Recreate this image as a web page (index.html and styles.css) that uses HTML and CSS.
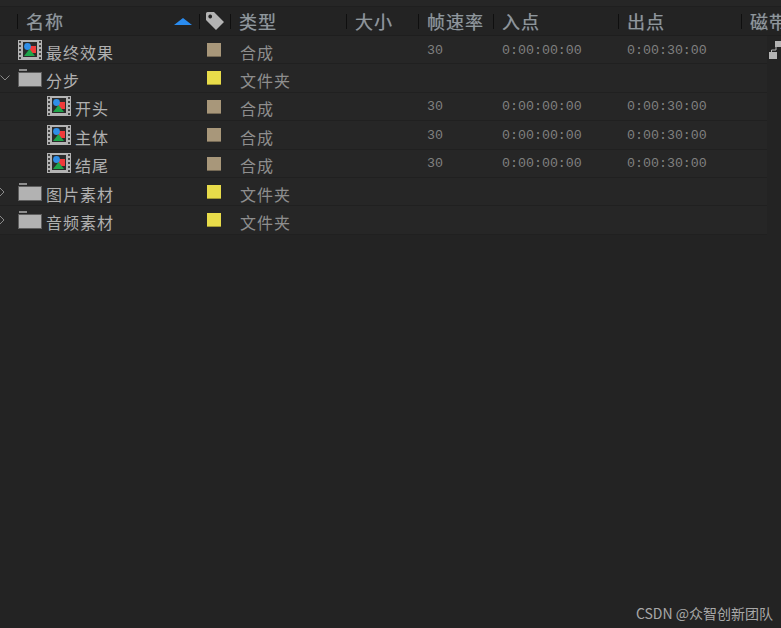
FILE: index.html
```html
<!DOCTYPE html>
<html lang="zh">
<head>
<meta charset="utf-8">
<title>项目面板</title>
<link rel="stylesheet" href="styles.css">
</head>
<body>
<svg class="defs" width="0" height="0" aria-hidden="true">
  <symbol id="comp" viewBox="0 0 24 20">
    <rect x="0" y="0" width="24" height="20" fill="#b4b4b4"/>
    <rect x="1" y="1" width="2" height="2" fill="#444"/><rect x="1" y="5" width="2" height="2" fill="#444"/><rect x="1" y="9" width="2" height="2" fill="#444"/><rect x="1" y="13" width="2" height="2" fill="#444"/><rect x="1" y="17" width="2" height="2" fill="#444"/>
    <rect x="21" y="1" width="2" height="2" fill="#444"/><rect x="21" y="5" width="2" height="2" fill="#444"/><rect x="21" y="9" width="2" height="2" fill="#444"/><rect x="21" y="13" width="2" height="2" fill="#444"/><rect x="21" y="17" width="2" height="2" fill="#444"/>
    <rect x="5" y="2" width="14" height="15" fill="#2b2b2b"/>
    <rect x="11" y="6" width="7" height="7" fill="#f03a3a"/>
    <circle cx="9.5" cy="6.5" r="3.4" fill="#2f8fe8"/>
    <polygon points="11.5,9 17,16 6,16" fill="#1fa64a"/>
  </symbol>
  <symbol id="folder" viewBox="0 0 24 18">
    <rect x="1" y="0" width="8" height="2" fill="#8d8d8d"/>
    <rect x="0.5" y="3.5" width="23" height="14" fill="#b2b2b2" stroke="#5e5e5e"/>
  </symbol>
</svg>
<main class="panel">
  <div class="strip"></div>
  <header class="cols head">
    <div class="hc first"><span class="hname">名称</span><svg class="sort" width="18" height="7" viewBox="0 0 18 7"><polygon points="9,0 18,7 0,7" fill="#2a8cf0"/></svg></div>
    <div class="hc tagc"><svg width="20" height="20" viewBox="0 0 20 20"><path d="M1 2.5 Q1 1 2.5 1 L9 1 L19 11 L11 19 L1 9 Z M5.2 3.6 a1.9 1.9 0 1 0 .01 0 Z" fill="#b4b4b4" fill-rule="evenodd"/></svg></div>
    <div class="hc">类型</div>
    <div class="hc">大小</div>
    <div class="hc">帧速率</div>
    <div class="hc">入点</div>
    <div class="hc">出点</div>
    <div class="hc clip">磁带名称</div>
  </header>
  <div class="body">
    <div class="rows">
      <div class="cols row">
        <div class="name"><span class="tw"></span><svg class="ic"><use href="#comp"/></svg><span>最终效果</span></div>
        <div class="swc"><i class="sw tan"></i></div><div class="type">合成</div><div></div><div class="num">30</div><div class="num">0:00:00:00</div><div class="num">0:00:30:00</div><div></div>
      </div>
      <div class="cols row">
        <div class="name"><span class="tw"><svg width="10" height="6" viewBox="0 0 10 6"><path d="M0.5 .5 L5 5 L9.5 .5" fill="none" stroke="#8a8a8a"/></svg></span><svg class="ic fo"><use href="#folder"/></svg><span>分步</span></div>
        <div class="swc"><i class="sw yel"></i></div><div class="type">文件夹</div><div></div><div></div><div></div><div></div><div></div>
      </div>
      <div class="cols row">
        <div class="name sub"><span class="tw"></span><svg class="ic"><use href="#comp"/></svg><span>开头</span></div>
        <div class="swc"><i class="sw tan"></i></div><div class="type">合成</div><div></div><div class="num">30</div><div class="num">0:00:00:00</div><div class="num">0:00:30:00</div><div></div>
      </div>
      <div class="cols row">
        <div class="name sub"><span class="tw"></span><svg class="ic"><use href="#comp"/></svg><span>主体</span></div>
        <div class="swc"><i class="sw tan"></i></div><div class="type">合成</div><div></div><div class="num">30</div><div class="num">0:00:00:00</div><div class="num">0:00:30:00</div><div></div>
      </div>
      <div class="cols row">
        <div class="name sub"><span class="tw"></span><svg class="ic"><use href="#comp"/></svg><span>结尾</span></div>
        <div class="swc"><i class="sw tan"></i></div><div class="type">合成</div><div></div><div class="num">30</div><div class="num">0:00:00:00</div><div class="num">0:00:30:00</div><div></div>
      </div>
      <div class="cols row">
        <div class="name"><span class="tw"><svg class="cr" width="6" height="10" viewBox="0 0 6 10"><path d="M.5 .5 L5 5 L.5 9.5" fill="none" stroke="#8a8a8a"/></svg></span><svg class="ic fo"><use href="#folder"/></svg><span>图片素材</span></div>
        <div class="swc"><i class="sw yel"></i></div><div class="type">文件夹</div><div></div><div></div><div></div><div></div><div></div>
      </div>
      <div class="cols row">
        <div class="name"><span class="tw"><svg class="cr" width="6" height="10" viewBox="0 0 6 10"><path d="M.5 .5 L5 5 L.5 9.5" fill="none" stroke="#8a8a8a"/></svg></span><svg class="ic fo"><use href="#folder"/></svg><span>音频素材</span></div>
        <div class="swc"><i class="sw yel"></i></div><div class="type">文件夹</div><div></div><div></div><div></div><div></div><div></div>
      </div>
    </div>
    <aside class="side">
      <svg width="12" height="19" viewBox="0 0 12 19"><rect x="6" y="0" width="6" height="6" fill="#b4b4b4"/><path d="M7 6 V9 H2.5 V12" fill="none" stroke="#b4b4b4"/><rect x="0" y="11" width="8" height="7" fill="#b4b4b4"/></svg>
    </aside>
  </div>
  <div class="mark">CSDN @众智创新团队</div>
</main>
</body>
</html>
```
FILE: styles.css
```css
* { box-sizing: border-box; }
html, body { margin: 0; height: 100%; overflow: hidden; background: #232323; }
body { font-family: "Noto Sans CJK SC", "Liberation Sans", sans-serif; }
.defs { position: absolute; }
.panel { position: relative; height: 628px; width: 781px; overflow: hidden; }
.strip { height: 7px; background: #262626; border-bottom: 1px solid #1f1f1f; }
.cols { display: grid; grid-template-columns: 199px 31px 116px 72px 75px 125px 123px 1fr; align-items: center; }
.head { height: 29px; border-bottom: 1px solid #1e1e1e; color: #8f979c; font-size: 18px; line-height: 29px; letter-spacing: 1px; text-shadow: -.4px 0 rgba(190,130,70,.35), .4px 0 rgba(70,140,210,.45); }
.hc { display: flex; align-items: center; height: 28px; white-space: nowrap; overflow: hidden; }
.hc::before { content: ""; flex: none; width: 1px; height: 15px; margin-right: 8px; background: #0f0f0f; }
.first { padding-left: 17px; padding-right: 7px; }
.first .hname { flex: 1; }
.sort { flex: none; }
.tagc::before { margin-right: 5px; }
.tagc svg { flex: none; }
.clip { padding-right: 0; }
.body { display: flex; }
.rows { width: 767px; flex: none; }
.row { height: 28.4px; background: #262626; border-bottom: 1px solid #202020; }
.name { display: flex; align-items: center; height: 100%; color: #b0b0b0; font-size: 16px; letter-spacing: 1px; line-height: 1; }
.name span:last-child { padding-top: 4px; }
.sub { padding-left: 29px; }
.tw { flex: none; width: 18px; display: flex; align-items: center; }
.cr { margin-left: -1px; }
.ic { flex: none; width: 24px; height: 20px; margin-right: 4px; }
.fo { height: 18px; }
.swc { display: flex; height: 100%; padding: 7px 0 0 8px; }
.sw { display: block; width: 14px; height: 14px; border-bottom: 1px solid rgba(0,0,0,.3); }
.tan { background: #a8977a; }
.yel { background: #e8dc4a; }
.type { padding: 4px 0 0 10px; color: #8e8e8e; font-size: 16px; letter-spacing: 1px; line-height: 1; }
.num { padding-left: 9px; color: #808080; font-family: "Liberation Mono", monospace; font-size: 13.3px; padding-top: 1px; line-height: 1; }
.side { flex: 1; padding: 5px 0 0 2px; }
.side svg { display: block; }
.mark { position: absolute; right: 8px; top: 603px; color: #a8a8a8; font-size: 14px; line-height: 20px; white-space: nowrap; }
```
